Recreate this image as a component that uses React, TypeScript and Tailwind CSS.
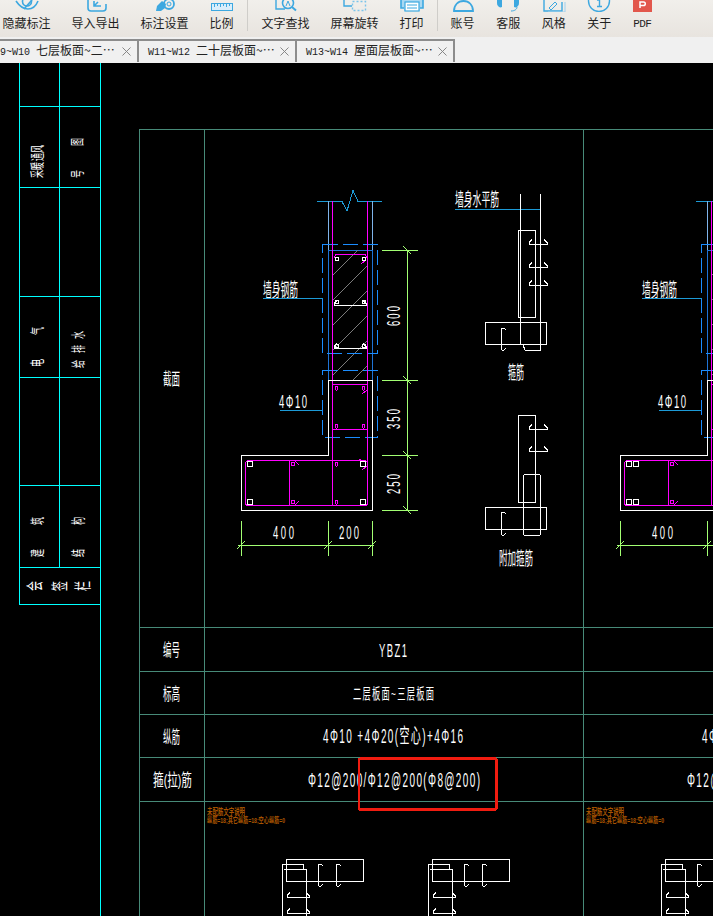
import { FC, ReactNode } from "react";
import { X } from "lucide-react";
import clsx from "clsx";

const BLUE = "#3da8e0";
const CJK = "'Liberation Sans','Noto Sans CJK SC',sans-serif";

const icons: Record<string, ReactNode> = {
  eye: (
    <>
      <path d="M1 1c4 6 8 8 12 8s8-3 10-8" fill="none" stroke={BLUE} strokeWidth="1.6" />
      <circle cx="12" cy="1.5" r="4.5" fill="none" stroke={BLUE} strokeWidth="1.6" />
      <path d="M17 0l-8 9" stroke={BLUE} strokeWidth="1.6" />
    </>
  ),
  doc: (
    <>
      <path d="M4 0v8a3 3 0 0 0 3 3h12a3 3 0 0 0 3-3V4" fill="none" stroke={BLUE} strokeWidth="1.6" />
      <path d="M10 1v5h7M10 6l4-4" fill="none" stroke={BLUE} strokeWidth="1.6" />
    </>
  ),
  gear: (
    <>
      <path d="M3 11l1-5 5-5 4 3-1 4-4 3z" fill={BLUE} />
      <circle cx="16" cy="4" r="5" fill="none" stroke={BLUE} strokeWidth="1.8" />
      <circle cx="16" cy="4" r="2" fill="none" stroke={BLUE} strokeWidth="1" />
    </>
  ),
  ruler: (
    <>
      <rect x="1.500" y="3.500" width="21" height="7" fill="#d9eefb" stroke={BLUE} />
      <path d="M4.500 4v3M7.500 4v2M10.500 4v3M13.500 4v2M16.500 4v3M19.500 4v2" stroke={BLUE} />
    </>
  ),
  search: (
    <>
      <path d="M2 0v9h9" fill="none" stroke={BLUE} strokeWidth="1.400" />
      <circle cx="14" cy="3" r="5.500" fill="none" stroke={BLUE} strokeWidth="1.600" />
      <path d="M18 7l4 3.500" stroke={BLUE} strokeWidth="2" />
      <path d="M12 6l2-5 2 5" fill="none" stroke={BLUE} />
    </>
  ),
  rotate: (
    <>
      <path d="M1 0v6h8" fill="none" stroke={BLUE} strokeWidth="1.400" />
      <path d="M9.500 1.500h13v9h-13z" fill="none" stroke="#7cc4ea" strokeWidth="1.400" strokeDasharray="2 2" />
    </>
  ),
  print: (
    <>
      <path d="M1 0h22v8h-3v3H4V8H1z" fill="#a9d8f2" />
      <path d="M1 0v8h3M23 0v8h-3" fill="none" stroke={BLUE} strokeWidth="1.600" />
      <rect x="5" y="2" width="14" height="9" fill="#fff" stroke={BLUE} strokeWidth="1.200" />
      <path d="M7 5h10M7 8h10" stroke={BLUE} />
    </>
  ),
  account: (
    <path d="M3 11c0-6 4-10 9.500-10s9.500 4 9.500 10z" fill="none" stroke={BLUE} strokeWidth="1.800" />
  ),
  service: (
    <>
      <path d="M1 0h5v7a3 3 0 0 1-3 0 4 4 0 0 1-2-4z" fill={BLUE} />
      <path d="M18 0h5v3a4 4 0 0 1-2 4 3 3 0 0 1-3 0z" fill={BLUE} />
      <path d="M21 7c0 2-2 4-6 4" fill="none" stroke={BLUE} />
    </>
  ),
  style: (
    <>
      <path d="M2 0v9l0 2h18v-9" fill="none" stroke={BLUE} strokeWidth="1.400" />
      <path d="M7 8l6-6 2 2-6 6z" fill="none" stroke={BLUE} />
      <path d="M23 2v10H6" fill="none" stroke="#9fd0ee" />
    </>
  ),
  about: (
    <>
      <circle cx="12" cy="1" r="10.500" fill="none" stroke={BLUE} strokeWidth="1.400" />
      <path d="M10 0h2.500v6M10 6.500h5" fill="none" stroke={BLUE} strokeWidth="1.400" />
    </>
  ),
};

const Tool: FC<{ icon: string; label: string }> = ({ icon, label }) => (
  <div className="flex flex-col items-center">
    <svg width="24" height="12" viewBox="0 0 24 12" className="block">
      {icons[icon]}
    </svg>
    <span className="mt-[3px] text-[12px] leading-[16px] text-[#1f1f1f] whitespace-nowrap">
      {label}
    </span>
  </div>
);

const PdfTool = () => (
  <div className="flex flex-col items-center">
    <svg width="19" height="12" viewBox="0 0 19 12" className="block">
      <rect width="19" height="12" fill="#e2574c" />
      <path d="M7 8V2h3.500a1.800 1.800 0 0 1 0 3.600H7" fill="none" stroke="#fff" strokeWidth="1.500" />
    </svg>
    <span className="mt-[4px] font-['Liberation_Mono'] text-[11px] leading-[16px] tracking-[-0.6px] text-[#1f1f1f]">
      PDF
    </span>
  </div>
);

const Tab: FC<{ code: string; title: string; first?: boolean }> = ({ code, title, first }) => (
  <div
    className={clsx(
      "flex h-[23px] w-[158px] shrink-0 items-center border-t-2 border-r-2 border-[#8c8c8c] bg-[#f0f0f0] pr-[3px]",
      first ? "ml-[-19px] pl-[7px]" : "pl-[9px]",
    )}
  >
    <span className="flex-1 whitespace-pre text-[12px] leading-[20px] text-[#222]">
      <span className="font-['Liberation_Mono'] text-[10px]">{code} </span>
      {title}
    </span>
    <X size={15} strokeWidth={1.5} className="text-[#808080]" />
  </div>
);

// CAD text: glyphs are narrowed by sx, what is left of the width goes between them
const Cad: FC<{
  x: number;
  y: number;
  w: number;
  size: number;
  sx?: number;
  bold?: boolean;
  fill?: string;
  children: string;
}> = ({ x, y, w, size, sx, bold, fill = "#fff", children }) =>
  sx ? (
    <text
      transform={`translate(${x} ${y}) scale(${sx} 1)`}
      textLength={w / sx}
      lengthAdjust="spacing"
      fontSize={size}
      fill={fill}
      fontFamily={CJK}
      stroke="none"
    >
      {children}
    </text>
  ) : (
    <text
      x={x}
      y={y}
      textLength={w}
      lengthAdjust="spacingAndGlyphs"
      fontSize={size}
      fontWeight={bold ? 700 : 400}
      fill={fill}
      fontFamily={CJK}
      stroke="none"
    >
      {children}
    </text>
  );

// rotated number on a dimension line
const DimV: FC<{ cx: number; cy: number; children: string }> = ({ cx, cy, children }) => (
  <g transform={`translate(${cx} ${cy}) rotate(-90)`}>
    <Cad x={-10} y={6.5} w={20} size={19} sx={0.5}>
      {children}
    </Cad>
  </g>
);

// single glyph of the title block, each turned on its side
const Side: FC<{ cx: number; cy: number; ch: string; w?: number; h?: number }> = ({
  cx,
  cy,
  ch,
  w = 14,
  h = 8,
}) => (
  <text
    transform={`translate(${cx} ${cy}) rotate(-90) scale(${h / w} 1)`}
    textAnchor="middle"
    dominantBaseline="central"
    fontSize={w}
    fill="#fff"
    fontFamily={CJK}
  >
    {ch}
  </text>
);

const Tie: FC<{ x1: number; x2: number; y: number }> = ({ x1, x2, y }) => (
  <path
    d={`M${x1 + 3} ${y - 5}L${x1} ${y - 2}V${y}H${x2}V${y - 2}L${x2 - 3} ${y - 5}`}
    fill="none"
    stroke="#fff"
  />
);

const CShape: FC<{ x: number; y1: number; y2: number }> = ({ x, y1, y2 }) => (
  <path
    d={`M${x + 5} ${y1 + 2}L${x + 3} ${y1}H${x + 1}L${x} ${y1 + 2}V${y2 - 2}L${x + 1} ${y2}H${x + 3}L${x + 5} ${y2 - 2}`}
    fill="none"
    stroke="#fff"
  />
);

const Column: FC<{ next?: boolean }> = ({ next }) => {
  const dim = "#a3ff73";
  const pink = "#ff00ff";
  const dash = "#1a8cff";
  const leader = "#1c9ad6";
  return (
    <g fill="none">
      {/* wall break line */}
      <path d="M317 201.500H342L347 211L353 190.500L358 201.500H382" stroke={leader} />
      <path d="M328.500 201V250M372.500 201V250" stroke="#7fb4ea" />
      <path d="M328.500 250V380M372.500 250V380M328.500 250.500H372.500" stroke="#1f74d6" />

      {/* hatch */}
      <g stroke="#7c7c7c" clipPath="url(#hatch)">
        {[276, 301, 326, 351, 376, 401].map((c) => (
          <path key={c} d={`M332 ${c}L368 ${c - 36}`} />
        ))}
      </g>

      <rect x="322.500" y="244.500" width="55" height="109" stroke={dash} strokeDasharray="15 5" />
      <rect x="322.500" y="370.500" width="55" height="67" stroke={dash} strokeDasharray="15 5" />

      {/* magenta main bars */}
      <path d="M332.500 201V505M367.500 201V505" stroke={pink} />
      <path d="M334 258L336 254.500H365L367 258" stroke={pink} />
      <path d="M361 264L366 260" stroke={pink} />
      <Tie x1={334} x2={366} y={305.5} />
      <Tie x1={334} x2={366} y={348.5} />
      {[
        [336, 258],
        [363, 258],
        [336, 301],
        [363, 301],
        [336, 345],
        [363, 345],
      ].map(([x, y]) => (
        <rect key={`${x}-${y}`} x={x - 1} y={y - 1} width="3" height="3" stroke="#fff" />
      ))}

      {/* boundary element */}
      <path d="M328.500 380.500H372.500V510.500H241.500V455.500H328.500Z" stroke="#fff" />
      <rect x="332.500" y="384.500" width="35" height="45" rx="1" stroke={pink} />
      {[
        [336, 388],
        [363, 388],
        [336, 426],
        [363, 426],
        [336, 464],
        [336, 502],
      ].map(([x, y]) => (
        <rect key={`${x}-${y}`} x={x - 1} y={y - 2} width="2.500" height="4" rx="1" stroke={pink} />
      ))}
      <path d="M362 394L367 390" stroke={pink} />
      <rect x="245.500" y="460.500" width="122" height="45" rx="3" stroke={pink} />
      <path d="M289.500 460V505" stroke={pink} />
      <circle cx="293" cy="464" r="2" stroke={pink} />
      <circle cx="293" cy="502" r="2" stroke={pink} />
      <path d="M295 461L299 465M295 505L299 501" stroke={pink} />
      <path d="M362 470L367 466M358 461L361 459" stroke={pink} />
      {[
        [363, 464],
        [363, 502],
      ].map(([x, y]) => (
        <circle key={`${x}-${y}`} cx={x} cy={y} r="3" stroke="#fff" />
      ))}
      {next ? (
        <>
          <rect x="247" y="461" width="5" height="5" stroke="#fff" />
          <rect x="247" y="499" width="5" height="5" stroke="#fff" />
          <circle cx="257" cy="464" r="3" stroke="#fff" />
          <circle cx="257" cy="502" r="3" stroke="#fff" />
        </>
      ) : (
        <>
          <circle cx="250" cy="464" r="3" stroke="#fff" />
          <circle cx="250" cy="502" r="3" stroke="#fff" />
        </>
      )}

      {/* dimension lines */}
      <path
        d="M407.500 250V510M382 250.500H418M382 380.500H418M382 455.500H418M382 510.500H418M238 545.500H374M241.500 521V556M328.500 521V556M372.500 521V556"
        stroke={dim}
      />
      <path
        d="M403 246L411 254M403 376L411 384M403 451L411 459M403 506L411 514M237 549L245 541M324 549L332 541M368 549L376 541"
        stroke={dim}
      />
      <Cad x={273} y={539} w={21} size={19} sx={0.5}>400</Cad>

      {/* leaders */}
      <Cad x={263} y={297} w={35} size={19}>墙身钢筋</Cad>
      <path d="M263 298.500H323" stroke={leader} />
      <Cad x={279} y={408} w={28} size={19} sx={0.5}>4Φ10</Cad>
      <path d="M280 410.500H322" stroke={leader} />

      {/* second column runs off the window, only the first one has these */}
      {!next && (
        <>
          <DimV cx={393.5} cy={316}>600</DimV>
          <DimV cx={393.5} cy={419}>350</DimV>
          <DimV cx={393.5} cy={484}>250</DimV>
          <Cad x={339} y={539} w={20} size={19} sx={0.5}>200</Cad>
          <Cad x={455} y={206} w={44} size={18}>墙身水平筋</Cad>
          <path d="M455 209.500H541" stroke={leader} />

          {/* stirrup details */}
          <path d="M520.500 194V345M540.500 194V345" stroke="#fff" />
          <rect x="518.500" y="230.500" width="17" height="87" stroke="#fff" />
          <Tie x1={529} x2={547} y={244.5} />
          <Tie x1={529} x2={547} y={267.5} />
          <Tie x1={529} x2={547} y={285.5} />
          <rect x="485.500" y="322.500" width="61" height="22" stroke="#fff" />
          <CShape x={501} y1={328} y2={350} />
          <path d="M523 345L525 350H540V343" stroke="#fff" />
          <Cad x={508} y={379} w={16} size={18}>箍筋</Cad>

          <rect x="518.500" y="415.500" width="17" height="87" stroke="#fff" />
          <Tie x1={529} x2={547} y={429.5} />
          <Tie x1={529} x2={547} y={451.5} />
          <rect x="523.500" y="474.500" width="17" height="61" rx="2" stroke="#fff" />
          <rect x="485.500" y="507.500" width="61" height="22" stroke="#fff" />
          <CShape x={501} y1={512} y2={535} />
          <Cad x={499} y={565} w={34} size={18}>附加箍筋</Cad>

          <Cad x={379} y={657} w={28} size={19} sx={0.5}>YBZ1</Cad>
          <Cad x={353} y={699} w={81} size={15} sx={0.55}>二层板面~三层板面</Cad>
        </>
      )}

      {/* table text */}
      <Cad x={323} y={743} w={140} size={20} sx={0.5}>4Φ10 +4Φ20(空心)+4Φ16</Cad>
      <Cad x={308} y={787} w={172} size={20} sx={0.5}>Φ12@200/Φ12@200(Φ8@200)</Cad>

      {/* orange note */}
      <Cad x={207} y={815} w={38} size={9} bold fill="#a85400">未配筋文字说明</Cad>
      <Cad x={207} y={823} w={78} size={8} bold fill="#a85400">纵筋=18;其它纵筋=18;空心纵筋=0</Cad>

      {/* section stirrups at the bottom */}
      {(next ? [0] : [0, 146]).map((dx) => (
        <g key={dx} transform={`translate(${dx} 0)`} stroke="#fff">
          <rect x="286.500" y="859.500" width="77" height="22" rx="1" />
          <path d="M282.500 916V864.500H303V869M284 869.500H306.500V916" />
          <CShape x={318} y1={864} y2={886} />
          <CShape x={336} y1={864} y2={886} />
          <Tie x1={287} x2={309} y={897.5} />
          <Tie x1={287} x2={309} y={913.5} />
        </g>
      ))}
    </g>
  );
};

export default function App() {
  const green = "#478a78";
  const cyan = "#00ffff";
  return (
    <div className="flex h-[916px] w-[713px] flex-col overflow-hidden bg-black font-['Noto_Sans_CJK_SC',sans-serif]">
      <div className="flex h-[37px] shrink-0 overflow-hidden bg-gradient-to-b from-[#f1efeb] to-[#e8e4df] pl-[2.500px]">
        <div className="flex gap-[21px]">
          <Tool icon="eye" label="隐藏标注" />
          <Tool icon="doc" label="导入导出" />
          <Tool icon="gear" label="标注设置" />
          <Tool icon="ruler" label="比例" />
        </div>
        <div className="mx-[13.500px] h-[31px] w-px bg-[#cfcdc9]" />
        <div className="flex gap-[21px]">
          <Tool icon="search" label="文字查找" />
          <Tool icon="rotate" label="屏幕旋转" />
          <Tool icon="print" label="打印" />
        </div>
        <div className="mx-[13px] h-[31px] w-px bg-[#cfcdc9]" />
        <div className="flex gap-[21.500px]">
          <Tool icon="account" label="账号" />
          <Tool icon="service" label="客服" />
          <Tool icon="style" label="风格" />
          <Tool icon="about" label="关于" />
          <PdfTool />
        </div>
      </div>

      <div className="flex h-[26px] shrink-0 items-end bg-[#f0f0f0] pb-px">
        <Tab first code="W09~W10" title="七层板面~二…" />
        <Tab code="W11~W12" title="二十层板面~…" />
        <Tab code="W13~W14" title="屋面层板面~…" />
      </div>

      <svg
        width="713"
        height="853"
        viewBox="0 63 713 853"
        shapeRendering="crispEdges"
        className="block"
      >
        <defs>
          <clipPath id="hatch">
            <rect x="332" y="250" width="36" height="130" />
          </clipPath>
        </defs>

        {/* title block */}
        <g stroke={cyan} fill="none">
          <path d="M19.500 63V604.500H100.500M59.500 63V567M100.500 63V916" />
          <path d="M19.500 106.500H100.500M19.500 187.500H100.500M19.500 296.500H100.500M19.500 377.500H100.500M19.500 485.500H100.500M19.500 567.500H100.500" />
        </g>
        {(
          [
            [37.5, 149, "风"],
            [37.5, 157, "通"],
            [37.5, 166, "暖"],
            [37.5, 174, "采"],
            [77, 142, "图"],
            [77, 174, "号"],
            [37.5, 331, "气"],
            [37.5, 363, "电"],
            [78, 335, "水"],
            [78, 349, "排"],
            [78, 364, "给"],
            [37.5, 521, "筑"],
            [37.5, 553, "建"],
            [78, 521, "构"],
            [78, 553, "结"],
          ] as [number, number, string][]
        ).map(([cx, cy, ch]) => (
          <Side key={ch} cx={cx} cy={cy} ch={ch} />
        ))}
        <Side cx={35} cy={586} ch="会" w={17} h={10} />
        <Side cx={60} cy={586} ch="签" w={17} h={10} />
        <Side cx={83} cy={586} ch="栏" w={17} h={10} />

        {/* drawing frame */}
        <g stroke={green} fill="none">
          <path d="M713 129.500H139.500V916M204.500 129.500V916M583.500 129.500V916" />
          <path d="M139.500 627.500H713M139.500 671.500H713M139.500 714.500H713M139.500 757.500H713M139.500 801.500H713" />
        </g>
        <Cad x={163} y={385} w={17} size={17}>截面</Cad>
        <Cad x={163} y={656} w={17} size={17}>编号</Cad>
        <Cad x={163} y={700} w={17} size={17}>标高</Cad>
        <Cad x={163} y={743} w={17} size={17}>纵筋</Cad>
        <Cad x={153} y={786} w={39} size={17}>箍(拉)筋</Cad>

        <Column />
        <g transform="translate(379 0)">
          <Column next />
        </g>

        <rect
          x="359"
          y="758.500"
          width="137.500"
          height="51"
          rx="2"
          fill="none"
          stroke="#f01c10"
          strokeWidth="2.500"
        />
      </svg>
    </div>
  );
}
